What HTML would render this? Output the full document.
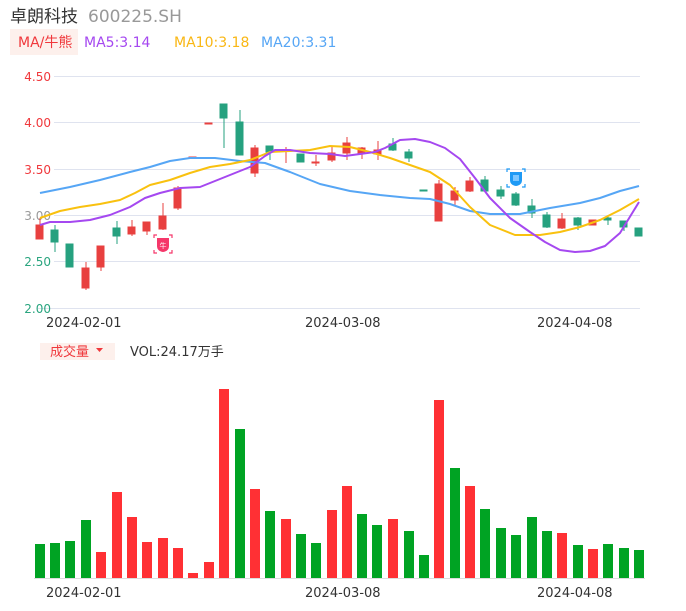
<!DOCTYPE html>
<html><head><meta charset="utf-8"><style>
body{margin:0;background:#fff;width:686px;height:606px;overflow:hidden;font-family:"Liberation Sans","Noto Sans CJK SC",sans-serif;}
svg text{font-family:"DejaVu Sans","Noto Sans CJK SC",sans-serif;}
</style></head><body>
<svg width="686" height="606" viewBox="0 0 686 606" xmlns="http://www.w3.org/2000/svg">
<text x="10" y="22" font-size="17" fill="#333" font-family="Noto Sans CJK SC">卓朗科技</text>
<text x="88" y="22" font-size="17" fill="#999">600225.SH</text>
<rect x="10" y="29" width="68" height="26" fill="#fdf0ec"/>
<text x="18" y="47" font-size="14" fill="#f0383c">MA/牛熊</text>
<text x="84" y="47" font-size="14" fill="#a548f0">MA5:3.14</text>
<text x="174" y="47" font-size="14" fill="#f9b714">MA10:3.18</text>
<text x="261" y="47" font-size="14" fill="#56a6f5">MA20:3.31</text>
<g stroke="#dfe3ef" stroke-width="1">
<line x1="54" y1="76.5" x2="640" y2="76.5"/><line x1="54" y1="122.5" x2="640" y2="122.5"/><line x1="54" y1="169.5" x2="640" y2="169.5"/><line x1="54" y1="215.5" x2="640" y2="215.5"/><line x1="54" y1="261.5" x2="640" y2="261.5"/><line x1="38" y1="308.5" x2="640" y2="308.5"/>
</g>
<g font-size="12" text-anchor="end">
<text x="51" y="81" fill="#f0383c">4.50</text><text x="51" y="127" fill="#f0383c">4.00</text><text x="51" y="174" fill="#f0383c">3.50</text><text x="51" y="220" fill="#999">3.00</text><text x="51" y="266" fill="#2aa57f">2.50</text><text x="51" y="313" fill="#2aa57f">2.00</text>
</g>
<g font-size="13" fill="#333"><text x="46" y="327">2024-02-01</text><text x="305" y="327">2024-03-08</text><text x="537" y="327">2024-04-08</text></g>
<g stroke-width="1">
<!-- candles: red #e8403f green #26a17f -->
<g fill="#e8403f" stroke="#e8403f">
<line x1="40" y1="218" x2="40" y2="239"/><rect x="36" y="225" width="7" height="14"/>
<line x1="86" y1="262" x2="86" y2="290"/><rect x="82" y="268" width="7" height="20"/>
<line x1="101" y1="246" x2="101" y2="271"/><rect x="97" y="246" width="7" height="21"/>
<line x1="132" y1="220" x2="132" y2="236"/><rect x="128" y="227" width="7" height="7"/>
<line x1="147" y1="222" x2="147" y2="235"/><rect x="143" y="222" width="7" height="9"/>
<line x1="163" y1="203" x2="163" y2="230"/><rect x="159" y="216" width="7" height="13"/>
<line x1="178" y1="186" x2="178" y2="210"/><rect x="174" y="188" width="7" height="20"/>
<rect x="189" y="157" width="7" height="1"/>
<rect x="205" y="123" width="7" height="1"/>
<line x1="255" y1="145" x2="255" y2="177"/><rect x="251" y="148" width="7" height="25"/>
<line x1="286" y1="147" x2="286" y2="163"/><rect x="282" y="150" width="7" height="1"/>
<line x1="316" y1="155" x2="316" y2="166"/><rect x="312" y="162" width="7" height="1"/>
<line x1="332" y1="147" x2="332" y2="162"/><rect x="328" y="153" width="7" height="7"/>
<line x1="347" y1="137" x2="347" y2="160"/><rect x="343" y="143" width="7" height="10"/>
<line x1="362" y1="147" x2="362" y2="159"/><rect x="358" y="148" width="7" height="5"/>
<line x1="378" y1="141" x2="378" y2="160"/><rect x="374" y="150" width="7" height="4"/>
<line x1="439" y1="180" x2="439" y2="221"/><rect x="435" y="184" width="7" height="37"/>
<line x1="455" y1="187" x2="455" y2="205"/><rect x="451" y="191" width="7" height="9"/>
<line x1="470" y1="177" x2="470" y2="192"/><rect x="466" y="181" width="7" height="10"/>
<line x1="562" y1="213" x2="562" y2="229"/><rect x="558" y="219" width="7" height="9"/>
<rect x="589" y="220" width="7" height="5"/>
</g>
<g fill="#26a17f" stroke="#26a17f">
<line x1="55" y1="225" x2="55" y2="252"/><rect x="51" y="230" width="7" height="12"/>
<rect x="66" y="244" width="7" height="23"/>
<line x1="117" y1="221" x2="117" y2="244"/><rect x="113" y="228" width="7" height="8"/>
<line x1="224" y1="104" x2="224" y2="148"/><rect x="220" y="104" width="7" height="14"/>
<line x1="240" y1="110" x2="240" y2="155"/><rect x="236" y="122" width="7" height="33"/>
<line x1="270" y1="146" x2="270" y2="160"/><rect x="266" y="146" width="7" height="6"/>
<rect x="297" y="154" width="7" height="8"/>
<line x1="393" y1="138" x2="393" y2="151"/><rect x="389" y="144" width="7" height="6"/>
<line x1="409" y1="149" x2="409" y2="162"/><rect x="405" y="152" width="7" height="6"/>
<rect x="420" y="190" width="7" height="1"/>
<line x1="485" y1="176" x2="485" y2="192"/><rect x="481" y="180" width="7" height="11"/>
<line x1="501" y1="186" x2="501" y2="199"/><rect x="497" y="190" width="7" height="6"/>
<line x1="516" y1="192" x2="516" y2="206"/><rect x="512" y="194" width="7" height="11"/>
<line x1="532" y1="199" x2="532" y2="218"/><rect x="528" y="206" width="7" height="7"/>
<line x1="547" y1="212" x2="547" y2="228"/><rect x="543" y="215" width="7" height="12"/>
<line x1="578" y1="217" x2="578" y2="230"/><rect x="574" y="218" width="7" height="7"/>
<line x1="608" y1="216" x2="608" y2="225"/><rect x="604" y="218" width="7" height="2"/>
<line x1="624" y1="221" x2="624" y2="231"/><rect x="620" y="221" width="7" height="6"/>
<rect x="635" y="228" width="7" height="8"/>
</g>
</g>
<g fill="none" stroke-width="2" stroke-linejoin="round">
<polyline stroke="#56a6f5" points="40,193 70,187 100,180 130,172 150,167 170,161 190,158 215,158 240,161 265,163 290,172 320,184 350,191 380,195 410,198 430,199 450,204 470,211 490,214 520,214 550,208 580,203 600,198 620,191 639,186"/>
<polyline stroke="#f9c10f" points="40,218 60,211 80,207 100,204 120,200 135,193 150,185 170,180 190,173 210,167 230,164 250,160 270,152 290,151 310,150 330,146 350,147 370,152 390,158 410,165 430,172 450,185 470,207 490,225 515,235 540,235 560,232 580,227 600,220 620,210 639,199"/>
<polyline stroke="#a548f0" points="40,225 50,222 70,222 90,220 110,215 130,207 145,198 160,193 180,188 200,187 215,181 230,175 250,167 265,156 275,150 290,150 310,153 330,154 345,156 360,154 375,152 385,148 400,140 415,139 430,142 445,148 460,159 475,178 490,198 510,218 530,232 545,242 560,250 575,252 590,251 605,246 620,233 639,202"/>
</g>
<!-- icons -->
<g fill="none" stroke="#f5376a" stroke-width="1.2"><path d="M154 238v-3h3M169 235h3v3M172 250v3h-3M157 253h-3v-3"/></g>
<path d="M157 238h12v8q0 5-6 6q-6-1-6-6z" fill="#f5376a"/>
<text x="163" y="248" font-size="7" fill="#fff" text-anchor="middle">牛</text>
<g fill="none" stroke="#1e9af5" stroke-width="1.2"><path d="M507 172v-3h3M522 169h3v3M525 184v3h-3M510 187h-3v-3"/></g>
<path d="M510 172h12v8q0 5-6 6q-6-1-6-6z" fill="#1e9af5"/>
<rect x="513" y="175" width="6" height="6" fill="#7cc6ff"/>
<!-- volume -->
<rect x="40" y="343" width="75" height="17" fill="#fdf0ec"/>
<text x="50" y="356" font-size="13" fill="#f0383c">成交量</text>
<path d="M96 348h7l-3.5 4z" fill="#f0383c"/>
<text x="130" y="356" font-size="13" fill="#333">VOL:24.17万手</text>
<line x1="34" y1="578.5" x2="645" y2="578.5" stroke="#ddd"/>
<g id="v"></g>
<g fill="#00a323">
<rect x="35" y="544" width="10" height="34"/><rect x="50" y="543" width="10" height="35"/><rect x="65" y="541" width="10" height="37"/><rect x="81" y="520" width="10" height="58"/>
<rect x="235" y="429" width="10" height="149"/><rect x="265" y="511" width="10" height="67"/><rect x="296" y="534" width="10" height="44"/><rect x="311" y="543" width="10" height="35"/>
<rect x="357" y="514" width="10" height="64"/><rect x="372" y="525" width="10" height="53"/><rect x="404" y="531" width="10" height="47"/><rect x="419" y="555" width="10" height="23"/>
<rect x="450" y="468" width="10" height="110"/><rect x="480" y="509" width="10" height="69"/><rect x="496" y="528" width="10" height="50"/><rect x="511" y="535" width="10" height="43"/><rect x="527" y="517" width="10" height="61"/><rect x="542" y="531" width="10" height="47"/>
<rect x="573" y="545" width="10" height="33"/><rect x="603" y="544" width="10" height="34"/><rect x="619" y="548" width="10" height="30"/><rect x="634" y="550" width="10" height="28"/>
</g>
<g fill="#ff3034">
<rect x="96" y="552" width="10" height="26"/><rect x="112" y="492" width="10" height="86"/><rect x="127" y="517" width="10" height="61"/><rect x="142" y="542" width="10" height="36"/><rect x="158" y="538" width="10" height="40"/><rect x="173" y="548" width="10" height="30"/><rect x="188" y="573" width="10" height="5"/><rect x="204" y="562" width="10" height="16"/><rect x="219" y="389" width="10" height="189"/>
<rect x="250" y="489" width="10" height="89"/><rect x="281" y="519" width="10" height="59"/><rect x="327" y="510" width="10" height="68"/><rect x="342" y="486" width="10" height="92"/><rect x="388" y="519" width="10" height="59"/>
<rect x="434" y="400" width="10" height="178"/><rect x="465" y="486" width="10" height="92"/><rect x="557" y="533" width="10" height="45"/><rect x="588" y="549" width="10" height="29"/>
</g>
<g font-size="13" fill="#333"><text x="46" y="597">2024-02-01</text><text x="305" y="597">2024-03-08</text><text x="537" y="597">2024-04-08</text></g>
</svg>
</body></html>
